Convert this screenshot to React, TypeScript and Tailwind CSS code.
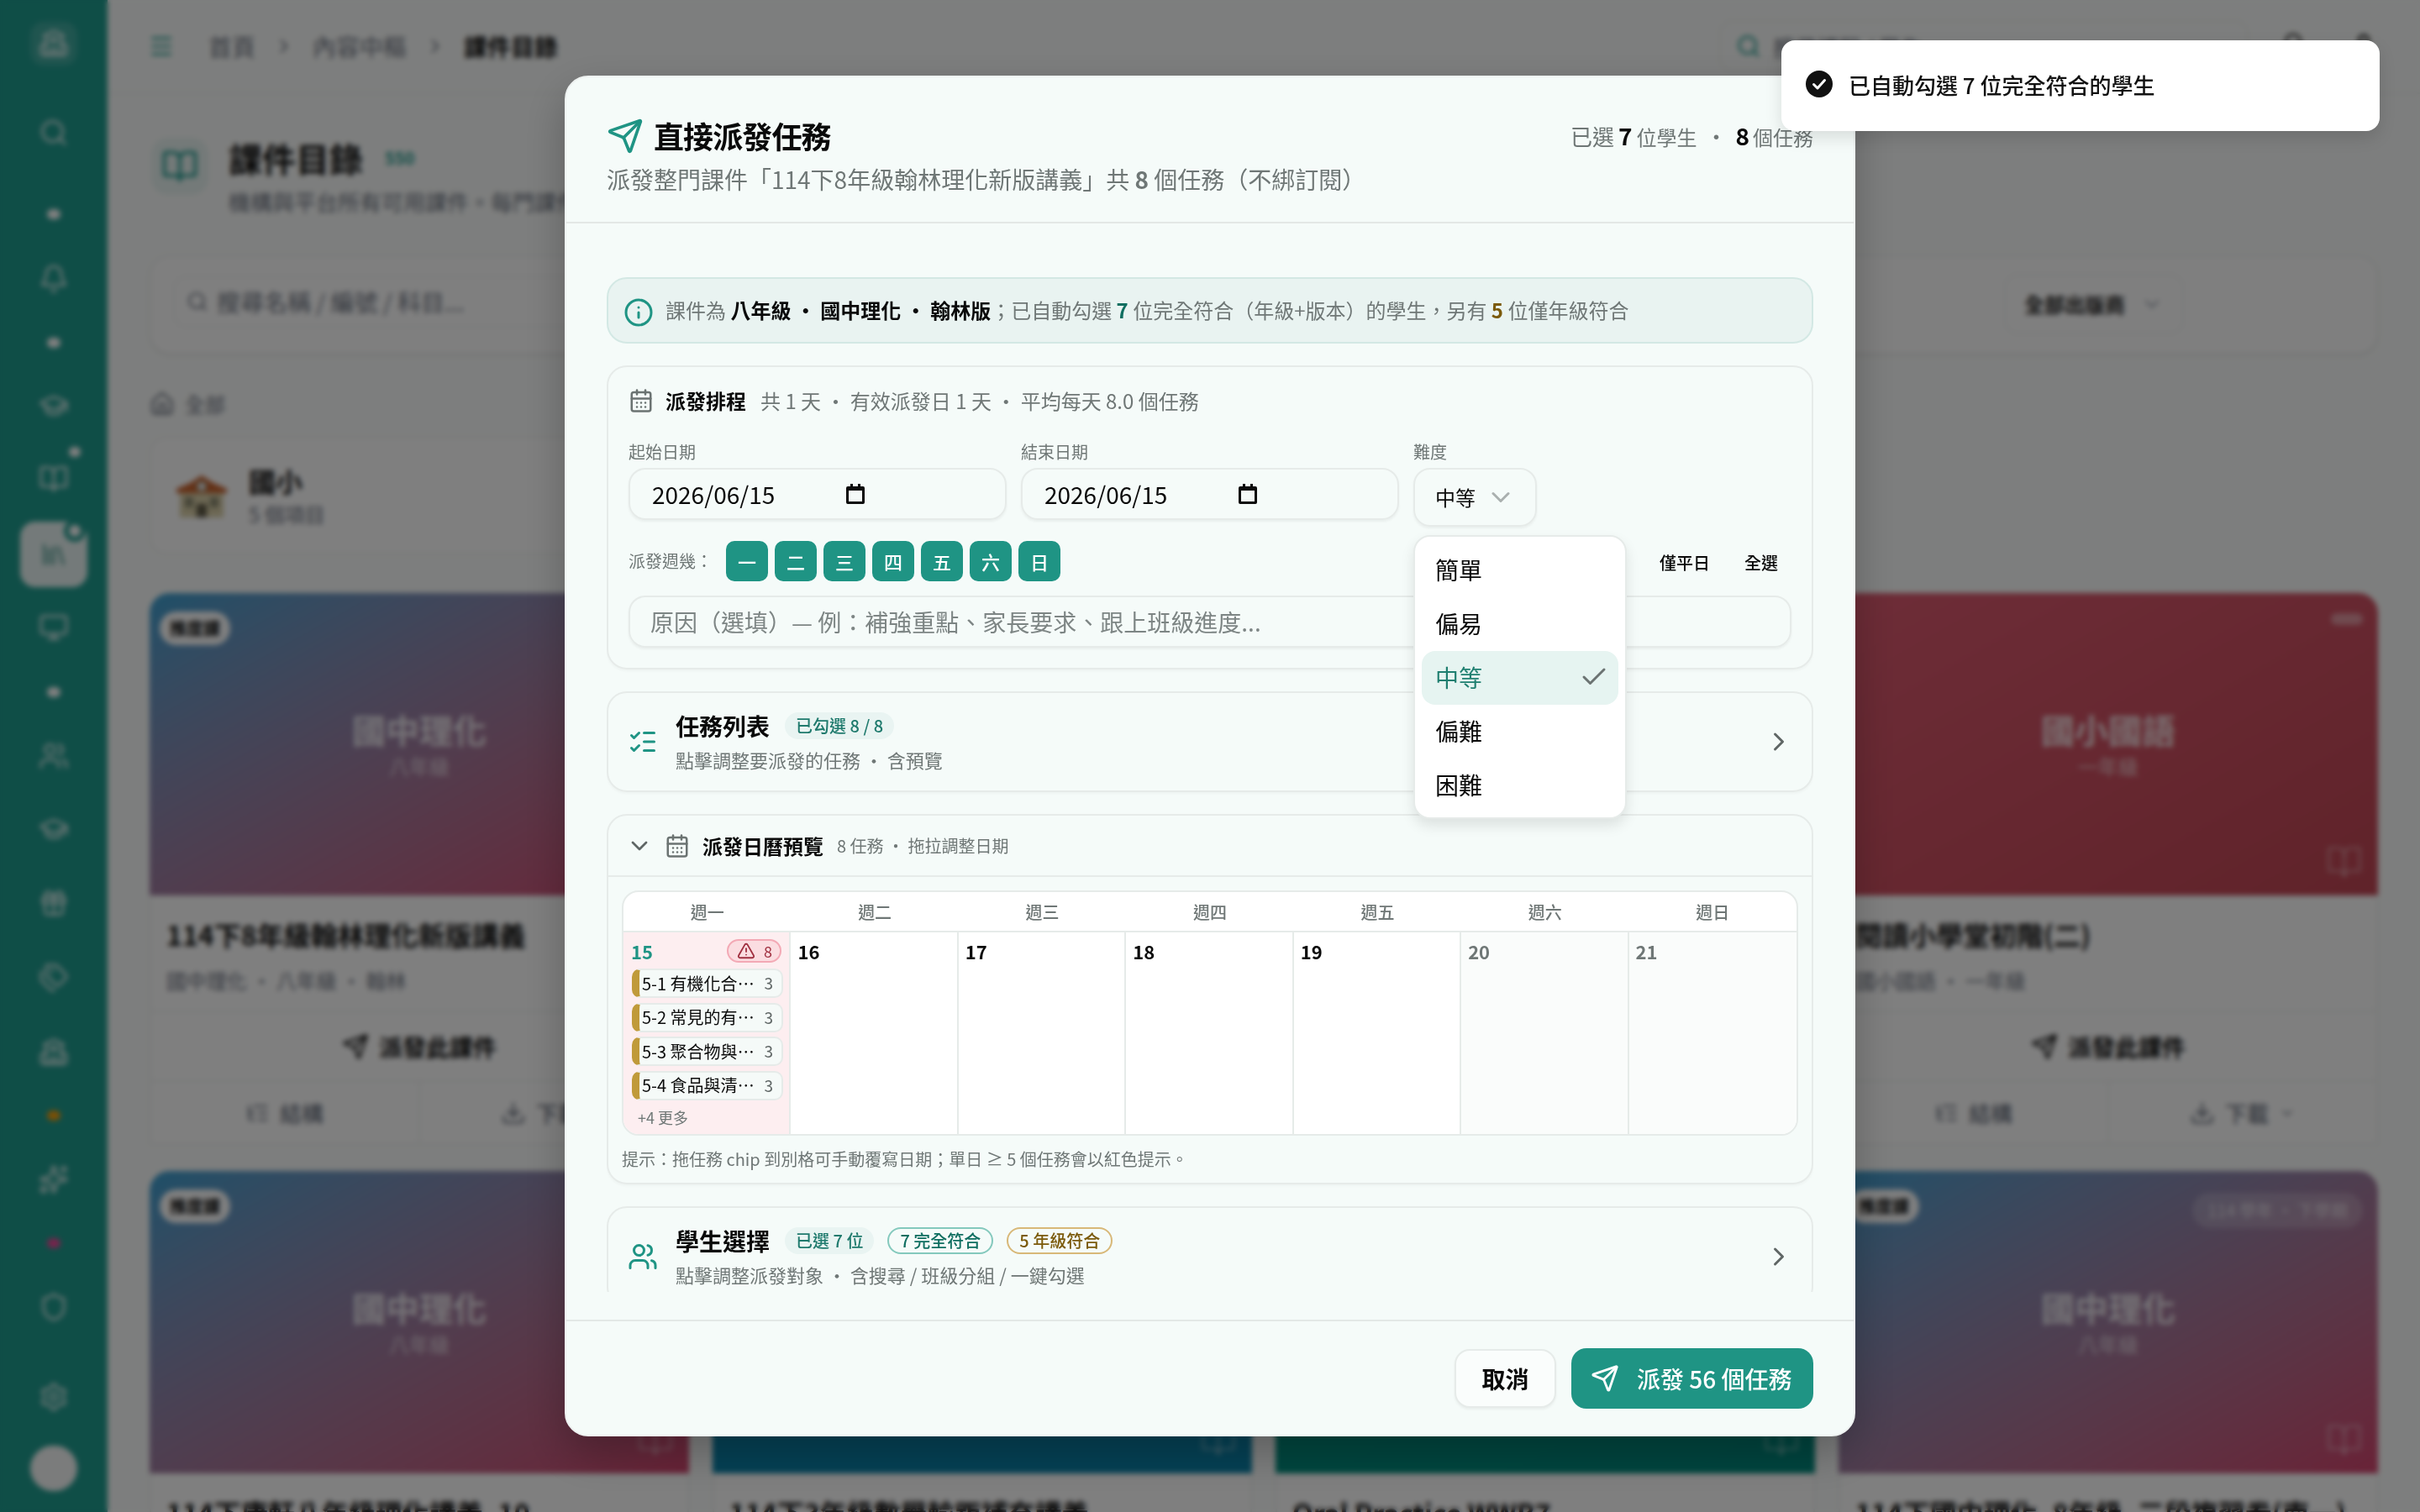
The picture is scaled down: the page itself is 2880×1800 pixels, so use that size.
import React from 'react'
import {
  Bell, BookOpen, Check, ChevronDown, ChevronRight, CalendarDays, Download, Gift, GraduationCap, Home, Info,
  Library, ListChecks, ListTree, Menu, Monitor, School, Search, Send, Settings, Shield, Sparkles, Tags,
  TriangleAlert, Users, User,
} from 'lucide-react'

// center y of every rail row, spacing between rows comes from these
const sidebarItems: { c: number; icon?: React.ElementType; dot?: string; active?: boolean; corner?: boolean }[] = [
  { c: 158, icon: Search },
  { c: 255, dot: 'bg-white' },
  { c: 332, icon: Bell },
  { c: 408, dot: 'bg-white' },
  { c: 483, icon: GraduationCap },
  { c: 570, icon: BookOpen, corner: true },
  { c: 660, icon: Library, active: true },
  { c: 747, icon: Monitor },
  { c: 824, dot: 'bg-white' },
  { c: 900, icon: Users },
  { c: 987, icon: GraduationCap },
  { c: 1075, icon: Gift },
  { c: 1164, icon: Tags },
  { c: 1253, icon: School },
  { c: 1328, dot: 'bg-[#f59e0b]' },
  { c: 1404, icon: Sparkles },
  { c: 1480, dot: 'bg-[#ec4899]' },
  { c: 1556, icon: Shield },
]

function Sidebar() {
  return (
    <aside className="w-[128px] shrink-0 h-full bg-[#1f9c8f] flex flex-col items-center pt-[26px] text-white/80">
      <div className="w-[56px] h-[52px] rounded-[16px] bg-white/15 flex items-center justify-center">
        <School size={36} />
      </div>
      <div className="flex flex-col items-center w-full">
        {sidebarItems.map((item, i) => {
          const Icon = item.icon
          const prev = i === 0 ? 78 : sidebarItems[i - 1].c + 18
          return (
            <div key={i} className="w-full h-[36px] flex items-center justify-center" style={{ marginTop: item.c - 18 - prev }}>
              {item.active ? (
                <div className="relative w-[80px] h-[78px] shrink-0 rounded-[18px] bg-white/90 flex items-center justify-center text-[#4f9c92]">
                  <Library size={34} />
                  <span className="absolute -top-[2px] right-[2px] w-[26px] h-[26px] rounded-full border-[6px] border-[#1f9c8f] bg-white" />
                </div>
              ) : Icon ? (
                <div className="relative">
                  <Icon size={36} strokeWidth={2} />
                  {item.corner && <span className="absolute -top-[20px] -right-[14px] w-[14px] h-[12px] rounded-full bg-white" />}
                </div>
              ) : (
                <span className={`w-[16px] h-[12px] rounded-full ${item.dot}`} />
              )}
            </div>
          )
        })}
      </div>
      <div className="mt-auto mb-[25px] flex flex-col items-center gap-[40px]">
        <Settings size={36} />
        <div className="w-[56px] h-[54px] rounded-full bg-[#f6f8f8]" />
      </div>
    </aside>
  )
}

function CourseCard({ title, sub, heading, meta, image, badge = true, pill, small }: {
  title: string
  sub: string
  heading: string
  meta: string
  image: string
  badge?: boolean
  pill?: boolean
  small?: boolean
}) {
  return (
    <div className="rounded-t-[24px] overflow-hidden bg-white">
      <div className={`relative h-[360px] flex flex-col items-center justify-center text-white/80 ${image}`}>
        {badge && <span className="absolute left-[12px] top-[22px] h-[40px] px-[12px] flex items-center rounded-full bg-white text-[#111] text-[20px] font-bold">推度課</span>}
        {pill && <span className="absolute right-[18px] top-[26px] px-[18px] py-[6px] rounded-full bg-white/20 text-[20px] text-white/70">114 學年 ・ 下學期</span>}
        {small && <span className="absolute right-[18px] top-[24px] w-[38px] h-[14px] rounded-full bg-white/40" />}
        <div className="text-[40px] font-semibold leading-[52px]">{title}</div>
        <div className="text-[24px] leading-[36px] text-white/70">{sub}</div>
        <BookOpen size={44} className="absolute right-[18px] bottom-[18px] text-white/30" />
      </div>
      <div className="border-x-2 border-b-2 border-[#eef1f0]">
        <div className="h-[137px] px-[18px] pt-[24px]">
          <div className="text-[32px] leading-[44px] font-semibold text-[#111] whitespace-nowrap">{heading}</div>
          <div className="text-[24px] leading-[34px] mt-[16px] text-[#6b7280] whitespace-nowrap">{meta}</div>
        </div>
        <div className="h-[83px] border-t-2 border-[#eef1f0] flex items-center justify-center gap-[12px] text-[28px] font-semibold text-[#111]">
          <Send size={32} />
          派發此課件
        </div>
        <div className="h-[75px] border-t-2 border-[#eef1f0] flex text-[26px] font-medium text-[#6b7280]">
          <div className="flex-1 flex items-center justify-center gap-[12px]"><ListTree size={28} />結構</div>
          <div className="flex-1 flex items-center justify-center gap-[12px] border-l-2 border-[#eef1f0]"><Download size={30} />下載<ChevronDown size={20} /></div>
        </div>
      </div>
    </div>
  )
}

function SchoolEmoji() {
  return (
    <svg width="64" height="60" viewBox="0 0 64 60">
      <rect x="6" y="20" width="52" height="36" fill="#d9cfa8" />
      <path d="M2 22 L20 14 L32 6 L44 14 L62 22 L62 27 L2 27 Z" fill="#c8622e" />
      <circle cx="32" cy="19" r="6" fill="#e8edf0" stroke="#8a6a3a" strokeWidth="1.5" />
      <rect x="12" y="32" width="10" height="12" fill="#8c8a70" />
      <rect x="42" y="32" width="10" height="12" fill="#8c8a70" />
      <rect x="26" y="40" width="12" height="16" fill="#5f5a46" />
    </svg>
  )
}

function Page() {
  return (
    <div className="flex h-full bg-[#fbfdfc]">
      <Sidebar />
      <div className="flex-1 min-w-0 flex flex-col">
        <header className="h-[112px] shrink-0 border-b-2 border-[#f0f3f2] flex items-center pl-[48px] pr-[50px] text-[28px]">
          <Menu size={32} className="text-[#1f9c8f]" />
          <span className="ml-[40px] text-[#6b7280]">首頁</span>
          <ChevronRight size={26} className="mx-[21px] text-[#6b7280]" />
          <span className="text-[#6b7280]">內容中樞</span>
          <ChevronRight size={26} className="mx-[21px] text-[#6b7280]" />
          <span className="font-semibold text-[#111]">課件目錄</span>
          <div className="ml-auto w-[630px] h-[62px] rounded-[16px] border-2 border-[#eef1f0] flex items-center px-[18px] gap-[14px]">
            <Search size={30} className="text-[#1f9c8f]" />
            <span className="text-[#6b7280] text-[26px]">搜尋課程 / 學生</span>
          </div>
          <Bell size={34} className="ml-[36px] text-[#333]" />
          <User size={34} className="ml-[50px] text-[#111]" />
        </header>
        <main className="flex-1 min-h-0 overflow-hidden px-[50px] pt-[52px]">
          <div className="flex gap-[24px] h-[94px]">
            <div className="w-[68px] h-[68px] ml-[2px] rounded-[20px] bg-[#e8f4f2] flex items-center justify-center text-[#1f9c8f]">
              <BookOpen size={44} />
            </div>
            <div>
              <div className="flex items-center gap-[26px] h-[48px]">
                <span className="text-[40px] font-bold text-[#111]">課件目錄</span>
                <span className="text-[20px] rounded-[8px] text-[#1f9c8f] font-semibold">550</span>
              </div>
              <div className="text-[26px] leading-[40px] mt-[8px] text-[#6b7280] whitespace-nowrap">機構與平台所有可用課件。每門課件都可以直接派發</div>
            </div>
          </div>
          <div className="mt-[46px] h-[118px] rounded-[24px] border-2 border-[#f0f3f2] bg-white shadow-sm flex items-start pt-[20px] pl-[26px] pr-[26px] justify-between">
            <div className="w-[800px] h-[62px] mt-[2px] rounded-[16px] border-2 border-[#f0f3f2] flex items-center px-[14px] gap-[10px] text-[#6b7280] text-[28px]">
              <Search size={26} />
              搜尋名稱 / 編號 / 科目...
            </div>
            <div className="w-[214px] h-[72px] mr-[203px] rounded-[16px] border-2 border-[#f0f3f2] flex items-center justify-center gap-[18px] text-[24px] font-semibold text-[#222]">
              全部出版商 <ChevronDown size={28} className="text-[#9ca3af]" />
            </div>
          </div>
          <div className="mt-[43px] h-[32px] flex items-center gap-[12px] text-[24px] text-[#6b7280]">
            <Home size={30} />
            全部
          </div>
          <div className="mt-[23px] w-[642px] h-[140px] rounded-[20px] border-2 border-[#f0f3f2] bg-white flex items-center px-[28px] gap-[24px]">
            <SchoolEmoji />
            <div>
              <div className="text-[32px] leading-[44px] font-bold text-[#111]">國小</div>
              <div className="text-[24px] leading-[36px] text-[#6b7280]">5 個項目</div>
            </div>
          </div>
          <div className="mt-[46px] grid grid-cols-4 gap-x-[28px] gap-y-[31px]">
            <CourseCard title="國中理化" sub="八年級" heading="114下8年級翰林理化新版講義" meta="國中理化 ・ 八年級 ・ 翰林" image="bg-gradient-to-br from-[#3a9fd0] to-[#d2446e]" />
            <CourseCard title="國中理化" sub="八年級" heading="114下8年級翰林理化新版講義" meta="國中理化 ・ 八年級" image="bg-gradient-to-br from-[#3a9fd0] to-[#d2446e]" />
            <CourseCard title="國小國語" sub="一年級" heading="閱讀小學堂初階(一)" meta="國小國語 ・ 一年級" image="bg-gradient-to-br from-[#dc5a70] to-[#c04654]" />
            <CourseCard title="國小國語" sub="一年級" heading="閱讀小學堂初階(二)" meta="國小國語 ・ 一年級" image="bg-gradient-to-br from-[#dc5a70] to-[#c04654]" badge={false} small />
            <CourseCard title="國中理化" sub="八年級" heading="114下康軒八年級理化講義_10" meta="國中理化 ・ 八年級" image="bg-gradient-to-br from-[#3a9fd0] to-[#d2446e]" />
            <CourseCard title="國小數學" sub="三年級" heading="114下3年級數學輸距補充講義" meta="國小數學 ・ 三年級" image="bg-gradient-to-br from-[#0a83aa] to-[#0a83aa]" />
            <CourseCard title="英語" sub="口說" heading="Oral Practice WWB7" meta="英語" image="bg-gradient-to-br from-[#00907f] to-[#008a7e]" />
            <CourseCard title="國中理化" sub="八年級" heading="114下國中理化_8年級_三段複習卷(南一)" meta="國中理化 ・ 八年級" image="bg-gradient-to-br from-[#3a9fd0] to-[#d2446e]" pill />
          </div>
        </main>
      </div>
    </div>
  )
}

function DateField({ label }: { label: string }) {
  return (
    <div className="w-[450px]">
      <div className="text-[20px] leading-[30px] h-[30px] text-[#6f7776]">{label}</div>
      <div className="mt-[4px] h-[62px] rounded-[20px] border-2 border-[#e6ebe9] shadow-[0_2px_3px_rgba(0,0,0,0.05)] flex items-center pl-[26px] text-[28px] text-[#0a0a0a]">
        <span className="w-[231px]">2026/06/15</span>
        <svg width="22" height="24" viewBox="0 0 22 24" fill="none">
          <path d="M5 0h3v3h6V0h3v3h3a2 2 0 0 1 2 2v17a2 2 0 0 1-2 2H2a2 2 0 0 1-2-2V5a2 2 0 0 1 2-2h3V0Z" fill="#0a0a0a" />
          <rect x="3" y="8" width="16" height="13" fill="#f5faf8" />
        </svg>
      </div>
    </div>
  )
}

function DifficultySelect() {
  const options = ['簡單', '偏易', '中等', '偏難', '困難']
  return (
    <div className="relative w-[147px]">
      <div className="text-[20px] leading-[30px] h-[30px] text-[#6f7776]">難度</div>
      <div className="mt-[4px] h-[70px] rounded-[20px] border-2 border-[#e6ebe9] shadow-[0_2px_3px_rgba(0,0,0,0.05)] flex items-center pl-[24px] gap-[12px] text-[24px] text-[#0a0a0a]">
        中等
        <ChevronDown size={36} strokeWidth={2} className="text-[#aab0af]" />
      </div>
      <div className="absolute z-10 left-0 top-[114px] w-[254px] h-[338px] rounded-[20px] border-2 border-[#e6ebe9] bg-white shadow-[0_8px_16px_rgba(0,0,0,0.1)] p-[8px]">
        {options.map((o) => (
          <div key={o} className={`h-[64px] rounded-[16px] flex items-center pl-[16px] pr-[11px] pb-[2px] justify-between text-[28px] ${o === '中等' ? 'bg-[#e6f4f1] text-[#1f7f70]' : 'text-[#0a0a0a]'}`}>
            {o}
            {o === '中等' && <Check size={36} strokeWidth={2} className="text-[#6b7372]" />}
          </div>
        ))}
      </div>
    </div>
  )
}

function Schedule() {
  return (
    <section className="shrink-0 rounded-[24px] border-2 border-[#e6ebe9] shadow-[0_2px_3px_rgba(0,0,0,0.03)] p-[24px]">
      <div className="h-[32px] flex items-center">
        <CalendarDays size={30} className="text-[#6b7372]" />
        <span className="ml-[14px] text-[24px] font-semibold text-[#0a0a0a] -mt-[1px]">派發排程</span>
        <span className="ml-[17px] text-[24px] text-[#6f7776] -mt-[1px]">共 1 天 ・ 有效派發日 1 天 ・ 平均每天 8.0 個任務</span>
      </div>
      <div className="mt-[30px] flex items-start gap-[17px]">
        <DateField label="起始日期" />
        <DateField label="結束日期" />
        <DifficultySelect />
      </div>
      <div className="mt-[17px] h-[48px] flex items-center">
        <span className="w-[116px] text-[20px] text-[#6f7776]">派發週幾：</span>
        <div className="flex gap-[8px]">
          {['一', '二', '三', '四', '五', '六', '日'].map((d) => (
            <div key={d} className="w-[50px] h-[48px] rounded-[10px] bg-[#1f9484] text-white text-[22px] font-medium flex items-center justify-center">{d}</div>
          ))}
        </div>
        <div className="ml-auto mr-[16px] mt-[3px] flex gap-[41px] text-[20px] font-medium text-[#0a0a0a]">
          <span>僅平日</span>
          <span>全選</span>
        </div>
      </div>
      <div className="mt-[17px] h-[62px] rounded-[20px] border-2 border-[#e6ebe9] shadow-[0_2px_3px_rgba(0,0,0,0.05)] flex items-center pl-[24px] text-[28px] text-[#7d8584]">
        原因（選填）— 例：補強重點、家長要求、跟上班級進度...
      </div>
    </section>
  )
}

function Badge({ children, tone }: { children: React.ReactNode; tone: 'soft' | 'teal' | 'amber' }) {
  const cls = {
    soft: 'bg-[#e9f4f2] text-[#1f7a6d]',
    teal: 'border-2 border-[#84c9bd] text-[#0e6e60]',
    amber: 'border-2 border-[#d8b878] text-[#7b5a0a]',
  }[tone]
  return <span className={`h-[32px] px-[13px] rounded-full flex items-center text-[20px] font-medium whitespace-nowrap ${cls}`}>{children}</span>
}

function RowHead({ icon: Icon, title, desc, children }: { icon: React.ElementType; title: string; desc: string; children: React.ReactNode }) {
  return (
    <div className="flex items-center pl-[23px] pr-[21px] h-[116px]">
      <Icon size={36} className="text-[#1f9484] shrink-0" />
      <div className="ml-[21px]">
        <div className="flex items-center gap-[18px] h-[36px] mt-[3px]">
          <span className="text-[28px] font-semibold text-[#0a0a0a]">{title}</span>
          {children}
        </div>
        <div className="mt-[5px] mb-[2px] text-[22px] leading-[34px] text-[#6f7776]">{desc}</div>
      </div>
      <ChevronRight size={36} className="ml-auto text-[#5f6665]" />
    </div>
  )
}

const chips = ['5-1 有機化合物的組成', '5-2 常見的有機化合物', '5-3 聚合物與衣料纖維', '5-4 食品與清潔用品']

function CalendarPreview() {
  const heads = ['週一', '週二', '週三', '週四', '週五', '週六', '週日']
  return (
    <section className="shrink-0 rounded-[24px] border-2 border-[#e6ebe9] shadow-[0_2px_3px_rgba(0,0,0,0.03)]">
      <div className="h-[73px] border-b-2 border-[#e6ebe9] flex items-center pl-[21px]">
        <ChevronDown size={32} className="text-[#5f6665]" />
        <CalendarDays size={30} className="ml-[14px] text-[#6b7372]" />
        <span className="ml-[15px] text-[24px] font-semibold text-[#0a0a0a]">派發日曆預覽</span>
        <span className="ml-[16px] text-[20px] text-[#6f7776]">8 任務 ・ 拖拉調整日期</span>
      </div>
      <div className="px-[16px] pt-[16px] pb-[14px]">
        <div className="rounded-[20px] border-2 border-[#e6ebe9] bg-white overflow-hidden">
          <div className="grid grid-cols-7 h-[48px] border-b-2 border-[#e6ebe9]">
            {heads.map((h) => (
              <div key={h} className="flex items-center justify-center pt-[2px] text-[20px] font-medium text-[#6f7776]">{h}</div>
            ))}
          </div>
          <div className="grid grid-cols-7 h-[240px]">
            <div className="bg-[#fdeef0] border-r-2 border-[#e6ebe9] px-[9px] pt-[8px]">
              <div className="flex items-center justify-between h-[28px]">
                <span className="text-[22px] font-semibold text-[#1f9484]">15</span>
                <span className="h-[28px] w-[65px] rounded-full border-2 border-[#f3a9b5] bg-[#fbdde1] flex items-center justify-center gap-[10px] text-[18px] text-[#a03040]">
                  <TriangleAlert size={22} />8
                </span>
              </div>
              <div className="mt-[7px] flex flex-col gap-[5.5px]">
                {chips.map((c) => (
                  <div key={c} className="h-[35px] w-[180px] ml-[1px] rounded-[10px] border-2 border-l-[9px] border-[#e6ebe9] border-l-[#c09a3a] bg-[#f5faf8] flex items-center pl-[3px] pr-[10px] text-[20px] text-[#0a0a0a]">
                    <span className="w-[134px] truncate">{c}</span>
                    <span className="ml-auto text-[19px] text-[#5f6665]">3</span>
                  </div>
                ))}
              </div>
              <div className="mt-[7px] pl-[8px] text-[18px] text-[#6f7776]">+4 更多</div>
            </div>
            {['16', '17', '18', '19', '20', '21'].map((d, i) => (
              <div key={d} className={`px-[8px] pt-[8px] ${i < 5 ? 'border-r-2 border-[#e6ebe9]' : ''} ${i > 3 ? 'bg-[#fafcfb] text-[#6f7776]' : 'text-[#0a0a0a]'}`}>
                <span className="text-[22px] leading-[28px] font-semibold">{d}</span>
              </div>
            ))}
          </div>
        </div>
        <div className="mt-[14px] text-[20px] leading-[28px] text-[#6f7776]">提示：拖任務 chip 到別格可手動覆寫日期；單日 ≥ 5 個任務會以紅色提示。</div>
      </div>
    </section>
  )
}

function Modal() {
  return (
    <div className="w-[1536px] h-[1620px] rounded-[28px] border-2 border-[#eef2f1] bg-[#f5fbf9] shadow-[0_20px_50px_rgba(0,0,0,0.25)] flex flex-col overflow-hidden">
      <div className="h-[174px] shrink-0 border-b-2 border-[#e3e8e6] px-[48px] pt-[46px]">
        <div className="flex items-center justify-between">
          <div className="flex items-center gap-[12px] h-[48px]">
            <Send size={44} strokeWidth={2} className="text-[#1f9484]" />
            <h2 className="text-[36px] font-semibold tracking-tight text-[#0a0a0a] -mt-[2px]">直接派發任務</h2>
          </div>
          <div className="text-[26px] text-[#6f7776] flex items-baseline whitespace-nowrap -mt-[2px]">
            已選<b className="mx-[5px] text-[28px] font-bold text-[#0a0a0a]">7</b><span className="text-[24px]">位學生</span>
            <span className="mx-[10px]">・</span>
            <b className="mr-[4px] text-[28px] font-bold text-[#0a0a0a]">8</b><span className="text-[24px]">個任務</span>
          </div>
        </div>
        <p className="mt-[5px] text-[28px] leading-[44px] text-[#6f7776] whitespace-nowrap">
          派發整門課件「114下8年級翰林理化新版講義」共 <b className="font-semibold">8</b> 個任務（不綁訂閱）
        </p>
      </div>

      <div className="h-[1305px] shrink-0 px-[48px] pt-[64px] pb-[33px]">
        <div className="h-full flex flex-col gap-[26px] overflow-hidden">
          <div className="shrink-0 h-[79px] rounded-[24px] border-2 border-[#d3e8e4] bg-[#e9f3f1] flex items-center pl-[18px] text-[24px] text-[#6f7776] whitespace-nowrap">
            <Info size={36} className="text-[#1f9484] mt-[4px]" />
            <span className="ml-[14px] -mt-[2px]">
              課件為 <b className="font-semibold text-[#0a0a0a]">八年級 ・ 國中理化 ・ 翰林版</b>；已自動勾選 <b className="font-bold text-[#0e6e60]">7</b> 位完全符合（年級+版本）的學生，另有 <b className="font-bold text-[#7b5a0a]">5</b> 位僅年級符合
            </span>
          </div>
          <Schedule />
          <section className="shrink-0 h-[120px] rounded-[24px] border-2 border-[#e6ebe9] shadow-[0_2px_3px_rgba(0,0,0,0.03)]">
            <RowHead icon={ListChecks} title="任務列表" desc="點擊調整要派發的任務 ・ 含預覽">
              <Badge tone="soft">已勾選 8 / 8</Badge>
            </RowHead>
          </section>
          <CalendarPreview />
          <section className="shrink-0 h-[120px] rounded-[24px] border-2 border-[#e6ebe9]">
            <RowHead icon={Users} title="學生選擇" desc="點擊調整派發對象 ・ 含搜尋 / 班級分組 / 一鍵勾選">
              <div className="flex gap-[16px]">
                <Badge tone="soft">已選 7 位</Badge>
                <Badge tone="teal">7 完全符合</Badge>
                <Badge tone="amber">5 年級符合</Badge>
              </div>
            </RowHead>
          </section>
        </div>
      </div>

      <div className="flex-1 border-t-2 border-[#e3e8e6] px-[48px] pt-[32px] flex items-start justify-end gap-[18px]">
        <button className="w-[121px] h-[70px] mt-[1px] rounded-[18px] border-2 border-[#e6ebe9] bg-[#fafdfc] shadow-[0_2px_3px_rgba(0,0,0,0.05)] text-[28px] font-semibold text-[#0a0a0a]">取消</button>
        <button className="w-[288px] h-[72px] rounded-[18px] bg-[#1f9484] text-white text-[28px] font-medium flex items-center pl-[23px] gap-[21px]">
          <Send size={34} />
          派發 56 個任務
        </button>
      </div>
    </div>
  )
}

export default function App() {
  return (
    <div className="relative w-[2880px] h-[1800px] overflow-hidden font-['Noto_Sans_CJK_TC','Noto_Sans',sans-serif]">
      <Page />
      <div className="absolute inset-0 bg-black/50 backdrop-blur-[3px] flex items-center justify-center">
        <Modal />
      </div>
      <div className="absolute top-[48px] right-[48px] w-[712px] h-[108px] rounded-[16px] bg-white shadow-[0_8px_20px_rgba(0,0,0,0.12)] flex items-center pl-[29px] pb-[4px] gap-[19px] text-[26px] font-medium text-[#111]">
        <svg width="32" height="32" viewBox="0 0 32 32">
          <circle cx="16" cy="16" r="16" fill="#111" />
          <path d="M9.5 16.5l4.5 4.5 8.5-9.5" fill="none" stroke="#fff" strokeWidth="3" strokeLinecap="round" strokeLinejoin="round" />
        </svg>
        已自動勾選 7 位完全符合的學生
      </div>
    </div>
  )
}
